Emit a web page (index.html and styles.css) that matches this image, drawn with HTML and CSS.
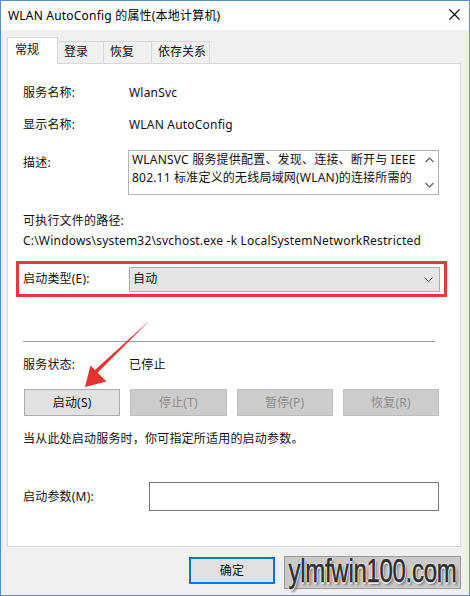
FILE: index.html
```html
<!DOCTYPE html>
<html lang="zh-CN">
<head>
<meta charset="utf-8">
<title>WLAN AutoConfig 的属性(本地计算机)</title>
<link rel="stylesheet" href="styles.css">
</head>
<body>
<div class="window">
  <div class="titlebar">
    <span class="title">WLAN AutoConfig 的属性(本地计算机)</span>
    <svg class="close" width="11" height="11" viewBox="0 0 11 11"><path d="M0.5 0.5 L10.5 10.5 M10.5 0.5 L0.5 10.5" stroke="#000" stroke-width="1.1" fill="none"/></svg>
  </div>
  <div class="client">
    <div class="tabs">
      <div class="tab active t1">常规</div>
      <div class="tab t2">登录</div>
      <div class="tab t3">恢复</div>
      <div class="tab t4">依存关系</div>
    </div>
    <div class="panel">
      <div class="row r-name"><span class="label">服务名称:</span><span class="value">WlanSvc</span></div>
      <div class="row r-disp"><span class="label">显示名称:</span><span class="value">WLAN AutoConfig</span></div>
      <div class="row r-desc">
        <span class="label desc-label">描述:</span>
        <div class="textbox">
          <div class="tb-text">WLANSVC 服务提供配置、发现、连接、断开与 IEEE<br>802.11 标准定义的无线局域网(WLAN)的连接所需的</div>
          <div class="tb-scroll">
            <svg width="9" height="6" viewBox="0 0 9 6"><path d="M0.5 5 L4.5 1 L8.5 5" stroke="#606060" stroke-width="1.2" fill="none"/></svg>
            <svg width="9" height="6" viewBox="0 0 9 6"><path d="M0.5 1 L4.5 5 L8.5 1" stroke="#606060" stroke-width="1.2" fill="none"/></svg>
          </div>
        </div>
      </div>
      <div class="line r-exe">可执行文件的路径:</div>
      <div class="line r-path">C:\Windows\system32\svchost.exe -k LocalSystemNetworkRestricted</div>
      <div class="row r-type highlight">
        <span class="label">启动类型(E):</span>
        <div class="select"><span>自动</span>
          <svg width="9" height="5" viewBox="0 0 9 5"><path d="M0.5 0.5 L4.5 4.5 L8.5 0.5" stroke="#5a5a5a" stroke-width="1" fill="none"/></svg>
        </div>
      </div>
      <div class="separator"></div>
      <div class="row r-status"><span class="label">服务状态:</span><span class="value">已停止</span></div>
      <div class="buttons">
        <div class="btn">启动(S)</div>
        <div class="btn disabled">停止(T)</div>
        <div class="btn disabled">暂停(P)</div>
        <div class="btn disabled">恢复(R)</div>
      </div>
      <div class="line r-help">当从此处启动服务时，你可指定所适用的启动参数。</div>
      <div class="row r-param"><span class="label param-label">启动参数(M):</span><div class="input"></div></div>
    </div>
    <div class="footer">
      <div class="btn dlg default">确定</div>
      <div class="btn dlg hidden-btn"></div>
      <div class="btn dlg hidden-btn"></div>
    </div>
  </div>
  <svg class="arrow" width="470" height="596" viewBox="0 0 470 596">
    <polygon points="148.4,321.6 147.6,322.4 94.3,376.1 91.4,373.3" fill="#e4322f"/>
    <polygon points="85,387 90.5,365.5 106.5,381.5" fill="#e4322f"/>
  </svg>
  <div class="watermark"><span>ylmfwin100.com</span></div>
</div>
</body>
</html>
```
FILE: styles.css
```css
* { box-sizing: border-box; }
html, body { margin: 0; padding: 0; background: #fff; }
body {
  font-family: "Noto Sans", "Noto Sans CJK SC", sans-serif;
  font-size: 12px;
  letter-spacing: 0.2px;
  color: #111;
}
.window {
  position: relative;
  width: 470px;
  height: 596px;
  border: 1px solid #5a8fce;
  display: flex;
  flex-direction: column;
  background: #f0f0f0;
  overflow: hidden;
}
.titlebar {
  height: 29px;
  background: #fff;
  display: flex;
  align-items: center;
  justify-content: space-between;
  padding: 0 9px 1px 7px;
  flex: none;
}
.title { font-size: 12px; color: #000; }
.close { display: block; margin-top: -2px; }
.client {
  flex: 1;
  display: flex;
  flex-direction: column;
  padding: 7px 8px 0 6px;
}
.tabs {
  display: flex;
  height: 26px;
  align-items: flex-end;
  flex: none;
  letter-spacing: 0;
}
.tab {
  height: 22px;
  border: 1px solid #d9d9d9;
  border-bottom: none;
  border-left: none;
  background: #f0f0f0;
  display: flex;
  align-items: center;
  padding: 0 0 1px 6px;
  line-height: 16px;
}
.tab.active {
  height: 27px;
  margin-bottom: -1px;
  background: #fff;
  border-left: 1px solid #d9d9d9;
  position: relative;
  z-index: 1;
  padding: 0 0 3px 7px;
}
.t1 { width: 51px; }
.t2 { width: 46px; }
.t3 { width: 48px; }
.t4 { width: 58px; }
.panel {
  flex: none;
  height: 484px;
  background: #fff;
  border: 1px solid #d9d9d9;
  padding: 0 20px 0 15px;
  display: flex;
  flex-direction: column;
}
.row { display: flex; align-items: center; line-height: 16px; }
.label { width: 106px; flex: none; }
.line { line-height: 16px; white-space: nowrap; }
.r-name { margin-top: 21px; }
.r-disp { margin-top: 16px; }
.r-desc { margin-top: 17px; align-items: flex-start; }
.desc-label { padding-top: 5px; }
.textbox {
  margin-left: -1px;
  width: 311px;
  height: 45px;
  border: 1px solid #b4b4b4;
  display: flex;
  overflow: hidden;
}
.tb-text {
  flex: 1;
  padding: 0 0 0 3px;
  line-height: 18px;
  white-space: nowrap;
  overflow: hidden;
}
.tb-scroll {
  width: 17px;
  flex: none;
  display: flex;
  flex-direction: column;
  align-items: center;
  justify-content: space-between;
  padding: 6px 0 6px 0;
}
.tb-scroll svg { display: block; }
.r-exe { margin-top: 18px; }
.r-path { margin-top: 4px; }
.highlight {
  margin-top: 12px;
  margin-left: -7px;
  width: 431px;
  height: 36px;
  border: 3px solid #de3b3b;
  padding-left: 4px;
}
.select {
  width: 311px;
  height: 25px;
  background: #e5e5e5;
  border: 1px solid #acacac;
  display: flex;
  align-items: center;
  justify-content: space-between;
  padding: 0 6px 0 3px;
}
.select svg { display: block; }
.separator {
  margin-top: 44px;
  height: 1px;
  width: 412px;
  background: #a0a0a0;
}
.r-status { margin-top: 15px; }
.buttons {
  margin-top: 16px;
  margin-left: 1px;
  width: 415px;
  display: flex;
  gap: 10px;
}
.btn {
  height: 27px;
  background: #e1e1e1;
  border: 1px solid #adadad;
  display: flex;
  align-items: center;
  justify-content: center;
  line-height: 16px;
  color: #111;
}
.buttons .btn { flex: 1; }
.btn.disabled {
  background: #cccccc;
  border-color: #bfbfbf;
  color: #8c8c8c;
}
.r-help { margin-top: 15px; }
.r-param { margin-top: 35px; }
.param-label { width: 126px; }
.input {
  width: 290px;
  height: 29px;
  border: 1px solid #7a7a7a;
  background: #fff;
}
.footer {
  flex: 1;
  display: flex;
  justify-content: flex-end;
  gap: 10px;
  padding: 10px 6px 0 0;
}
.btn.dlg { width: 86px; }
.btn.dlg.hidden-btn { width: 80px; }
.btn.default { border: 2px solid #0a74d4; }
.arrow {
  position: absolute;
  left: -1px;
  top: -1px;
  pointer-events: none;
}
.watermark {
  position: absolute;
  left: 283px;
  top: 555px;
  width: 177px;
  height: 33px;
  background: #c9c9c9;
  border: 1px solid #9a9a9a;
  display: flex;
  align-items: center;
  justify-content: center;
}
.watermark span {
  display: block;
  font-family: "Liberation Sans", sans-serif;
  font-size: 24px;
  line-height: 22px;
  letter-spacing: -0.3px;
  color: #2e2e2e;
  margin-top: -4px;
  transform: scaleY(1.4);
  white-space: nowrap;
  -webkit-text-stroke: 0.4px #2e2e2e;
  text-shadow: 1px 0 0 #eee, -1px 0 0 #eee, 0 1px 0 #eee, 0 -1px 0 #eee, 2px 2px 2px #777;
}
```
